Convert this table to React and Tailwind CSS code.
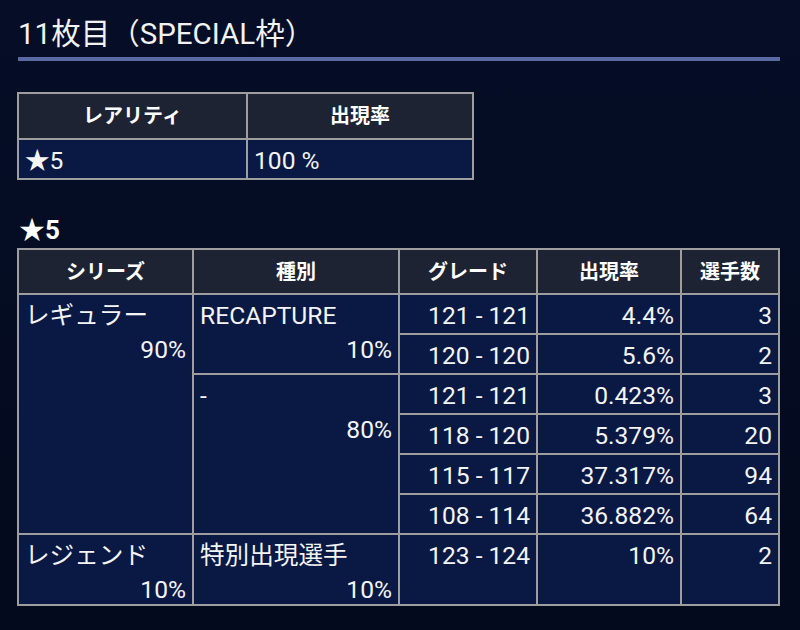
import React from 'react';

const font = { fontFamily: 'Roboto, "Noto Sans CJK JP", sans-serif' };

const Head = ({ children }) => (
    <div className="bg-[#1e2333] flex items-center justify-center text-[20px] font-bold text-white">
        {children}
    </div>
);

const Cell = ({ children, className = '' }) => (
    <div className={`bg-[#0a1944] px-[6px] pt-[4px] text-[24.6px] leading-[34px] text-[#f4f4f4] ${className}`}>
        {children}
    </div>
);

// two-line cell: label on top, share right aligned below
const Split = ({ label, pct, className = '' }) => (
    <Cell className={className}>
        <div>{label}</div>
        <div className="text-right">{pct}</div>
    </Cell>
);

const rows = [
    ['121 - 121', '4.4%', '3'],
    ['120 - 120', '5.6%', '2'],
    ['121 - 121', '0.423%', '3'],
    ['118 - 120', '5.379%', '20'],
    ['115 - 117', '37.317%', '94'],
    ['108 - 114', '36.882%', '64'],
];

const App = () => {
    return (
        <div className="w-[800px] h-[630px] overflow-hidden bg-gradient-to-b from-[#060e27] to-[#030a1d] pl-[17px]" style={font}>
            {/* title */}
            <h1 className="mt-[14px] h-[40px] pl-[1px] text-[29.5px] leading-[40px] font-normal text-[#f2f2f2]">
                11枚目（SPECIAL枠）
            </h1>
            <div className="mt-[3px] ml-[1px] h-[4px] w-[762px] bg-[#5a69a2]" />

            {/* rarity table */}
            <div className="mt-[31px] w-[457px] grid grid-cols-[227px_224px] grid-rows-[44px_38px] gap-[2px] p-[2px] bg-[#9e9e9e]">
                <Head>レアリティ</Head>
                <Head>出現率</Head>
                <Cell>★5</Cell>
                <Cell>100 %</Cell>
            </div>

            <h2 className="mt-[35px] h-[30px] pl-[2px] text-[26px] leading-[30px] font-bold text-white">★5</h2>

            {/* breakdown table */}
            <div className="mt-[3px] w-[763px] grid grid-cols-[173px_204px_136px_142px_96px] grid-rows-[43px_repeat(6,38px)_69px] gap-[2px] p-[2px] bg-[#9e9e9e]">
                <Head>シリーズ</Head>
                <Head>種別</Head>
                <Head>グレード</Head>
                <Head>出現率</Head>
                <Head>選手数</Head>

                <Split label="レギュラー" pct="90%" className="col-start-1 row-start-2 row-span-6" />
                <Split label="RECAPTURE" pct="10%" className="col-start-2 row-start-2 row-span-2" />
                <Split label="-" pct="80%" className="col-start-2 row-start-4 row-span-4" />

                {rows.map((r, i) => (
                    <React.Fragment key={i}>
                        <Cell className="col-start-3 text-right">{r[0]}</Cell>
                        <Cell className="col-start-4 text-right">{r[1]}</Cell>
                        <Cell className="col-start-5 text-right">{r[2]}</Cell>
                    </React.Fragment>
                ))}

                <Split label="レジェンド" pct="10%" className="col-start-1" />
                <Split label="特別出現選手" pct="10%" className="col-start-2" />
                <Cell className="text-right">123 - 124</Cell>
                <Cell className="text-right">10%</Cell>
                <Cell className="text-right">2</Cell>
            </div>
        </div>
    );
};

export default App;
